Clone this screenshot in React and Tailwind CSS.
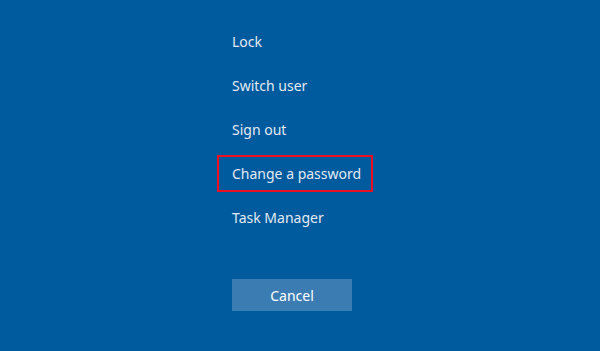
export default function App() {
  const items = ['Lock', 'Switch user', 'Sign out', 'Change a password', 'Task Manager'];
  const focused = 'Change a password';

  return (
    <div
      className="w-[600px] h-[351px] bg-[#005a9e] text-[#e3eaf2] overflow-hidden"
      style={{ fontFamily: '"Noto Sans", "Open Sans", sans-serif' }}
    >
      <div className="flex flex-col items-start pl-[217px] pt-[23px]">
        {items.map((item) => (
          <div
            key={item}
            className={`h-[37px] mb-[7px] flex items-center pl-[13px] pr-[10px] border-2 text-[14px] ${
              item === focused ? 'border-[#e81123]' : 'border-transparent'
            }`}
          >
            {item}
          </div>
        ))}
        <button className="mt-[36px] ml-[15px] w-[120px] h-[32px] bg-[#3b7cb3] text-[14px] text-white flex items-center justify-center">
          Cancel
        </button>
      </div>
    </div>
  );
}
